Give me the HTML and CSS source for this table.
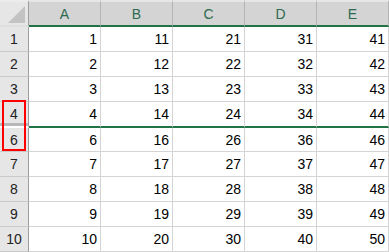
FILE: index.html
```html
<!DOCTYPE html>
<html>
<head>
<meta charset="utf-8">
<link rel="stylesheet" href="styles.css">
</head>
<body>
<div class="sheet">
  <div class="corner"><span class="tri"></span></div>
  <div class="colh">A</div><div class="colh">B</div><div class="colh">C</div><div class="colh">D</div><div class="colh">E</div>

  <div class="rowh">1</div><div class="cell">1</div><div class="cell">11</div><div class="cell">21</div><div class="cell">31</div><div class="cell">41</div>
  <div class="rowh">2</div><div class="cell">2</div><div class="cell">12</div><div class="cell">22</div><div class="cell">32</div><div class="cell">42</div>
  <div class="rowh">3</div><div class="cell">3</div><div class="cell">13</div><div class="cell">23</div><div class="cell">33</div><div class="cell">43</div>
  <div class="rowh hid">4</div><div class="cell hid">4</div><div class="cell hid">14</div><div class="cell hid">24</div><div class="cell hid">34</div><div class="cell hid">44</div>
  <div class="rowh short">6</div><div class="cell short">6</div><div class="cell short">16</div><div class="cell short">26</div><div class="cell short">36</div><div class="cell short">46</div>
  <div class="rowh">7</div><div class="cell">7</div><div class="cell">17</div><div class="cell">27</div><div class="cell">37</div><div class="cell">47</div>
  <div class="rowh">8</div><div class="cell">8</div><div class="cell">18</div><div class="cell">28</div><div class="cell">38</div><div class="cell">48</div>
  <div class="rowh">9</div><div class="cell">9</div><div class="cell">19</div><div class="cell">29</div><div class="cell">39</div><div class="cell">49</div>
  <div class="rowh">10</div><div class="cell">10</div><div class="cell">20</div><div class="cell">30</div><div class="cell">40</div><div class="cell">50</div>

  <div class="mark"></div>
</div>
</body>
</html>
```

FILE: styles.css
```css
html, body {
  margin: 0;
  padding: 0;
  background: #ffffff;
}

.sheet {
  position: relative;
  display: grid;
  grid-template-columns: 29px 72px 72px 72px 72px 72px;
  grid-template-rows: 27px 25px 25px 25px 26px 24px 25px 25px 25px 25px;
  width: 389px;
  font-family: "Liberation Sans", Arial, sans-serif;
  font-size: 14px;
  color: #000000;
}

.sheet > div {
  box-sizing: border-box;
  display: flex;
  align-items: center;
}

.corner {
  position: relative;
  background: #e6e6e6;
  border-right: 1px solid #9e9e9e;
  border-bottom: 2px solid #dedede;
  border-top: 2px solid #ececec;
}

.tri {
  position: absolute;
  left: 8px;
  top: 4px;
  width: 17px;
  height: 17px;
  background: #c3c3c3;
  clip-path: polygon(100% 0, 100% 100%, 0 100%);
}

.colh {
  justify-content: center;
  background: #d4d4d4;
  color: #2d6a4f;
  border-top: 2px solid #e6e6e6;
  border-right: 1px solid #b4b4b4;
  border-bottom: 2px solid #217346;
  padding-top: 1px;
}

.rowh {
  justify-content: center;
  background: #e6e6e6;
  color: #222222;
  border-right: 1px solid #9e9e9e;
  border-bottom: 1px solid #cacaca;
}

.rowh.hid {
  border-bottom: 2px solid #ffffff;
  box-shadow: inset 0 -3px 0 #b8b8b8;
}

.cell {
  justify-content: flex-end;
  padding-right: 3px;
  border-right: 1px solid #d4d4d4;
  border-bottom: 1px solid #d4d4d4;
}

.cell.hid {
  border-bottom: 2px solid #217346;
}

.mark {
  position: absolute;
  left: 2px;
  top: 100px;
  width: 24px;
  height: 51px;
  border: 2px solid #ff0000;
}
```
